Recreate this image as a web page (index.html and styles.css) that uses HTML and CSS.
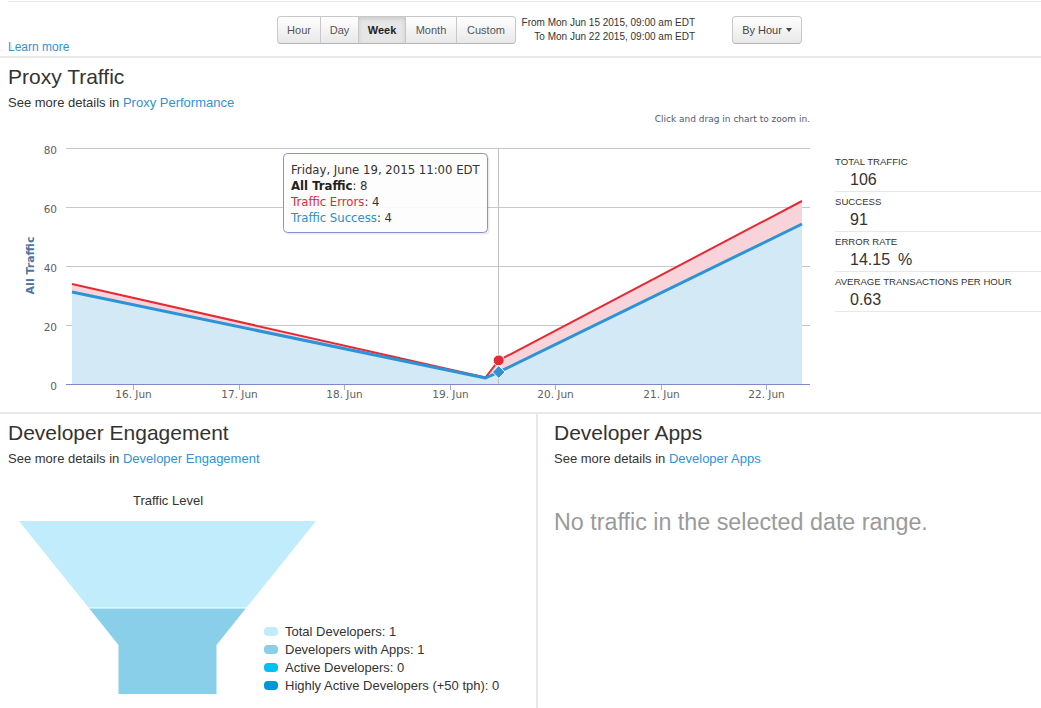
FILE: index.html
```html
<!DOCTYPE html>
<html>
<head>
<meta charset="utf-8">
<title>Analytics</title>
<link rel="stylesheet" href="styles.css">
</head>
<body>
<div class="topbar">
  <a class="learn" href="#">Learn more</a>
  <div class="btn-group">
    <span class="btn b-hour">Hour</span>
    <span class="btn b-day">Day</span>
    <span class="btn b-week active">Week</span>
    <span class="btn b-month">Month</span>
    <span class="btn b-custom">Custom</span>
  </div>
  <div class="range">
    <div>From Mon Jun 15 2015, 09:00 am EDT</div>
    <div>To Mon Jun 22 2015, 09:00 am EDT</div>
  </div>
  <span class="btn dropdown">By Hour <span class="caret"></span></span>
</div>
<div class="rule"></div>

<section class="proxy">
  <div class="head">
    <h2>Proxy Traffic</h2>
    <p class="more">See more details in <a href="#">Proxy Performance</a></p>
  </div>
  <div class="chart-row">
    <svg class="chart" width="835" height="301" viewBox="0 111 835 301">
      <text class="subtitle" x="810" y="122" text-anchor="end">Click and drag in chart to zoom in.</text>
      <g class="grid">
        <line x1="66" y1="148.5" x2="810" y2="148.5"/>
        <line x1="66" y1="207.5" x2="810" y2="207.5"/>
        <line x1="66" y1="266.5" x2="810" y2="266.5"/>
        <line x1="66" y1="325.5" x2="810" y2="325.5"/>
      </g>
      <g class="ylab">
        <text x="57" y="154" text-anchor="end">80</text>
        <text x="57" y="213" text-anchor="end">60</text>
        <text x="57" y="272" text-anchor="end">40</text>
        <text x="57" y="331" text-anchor="end">20</text>
        <text x="57" y="390" text-anchor="end">0</text>
      </g>
      <text class="ytitle" transform="translate(33.5,265.5) rotate(-90)" text-anchor="middle">All Traffic</text>
      <polygon class="area-blue" points="72,384 72,292 485.5,378 498.7,372.2 802,224 802,384"/>
      <polygon class="area-red" points="72,284 485.5,378 498.7,360.4 802,201 802,224 498.7,372.2 485.5,378 72,292"/>
      <line class="cross" x1="498.5" y1="148" x2="498.5" y2="384"/>
      <polyline class="line-red" points="72,284 485.5,377.5 498.7,360.4 802,201"/>
      <polyline class="line-blue" points="72,292 485.5,378 498.7,372.2 802,224"/>
      <line class="axis" x1="66" y1="384.5" x2="810" y2="384.5"/>
      <g class="ticks">
        <line x1="133.5" y1="385" x2="133.5" y2="390"/>
        <line x1="239.5" y1="385" x2="239.5" y2="390"/>
        <line x1="344.5" y1="385" x2="344.5" y2="390"/>
        <line x1="450.5" y1="385" x2="450.5" y2="390"/>
        <line x1="555.5" y1="385" x2="555.5" y2="390"/>
        <line x1="661.5" y1="385" x2="661.5" y2="390"/>
        <line x1="766.5" y1="385" x2="766.5" y2="390"/>
      </g>
      <g class="xlab" text-anchor="middle">
        <text x="133.5" y="398">16. Jun</text>
        <text x="239.5" y="398">17. Jun</text>
        <text x="344.5" y="398">18. Jun</text>
        <text x="450.5" y="398">19. Jun</text>
        <text x="555.5" y="398">20. Jun</text>
        <text x="661.5" y="398">21. Jun</text>
        <text x="766.5" y="398">22. Jun</text>
      </g>
      <circle class="mark-red" cx="498.7" cy="360.4" r="5.5"/>
      <path class="mark-blue" d="M498.7 365.6 L505 372 L498.7 378.4 L492.4 372 Z"/>
      <g class="tooltip">
        <rect class="tt-shadow" x="285.5" y="155.5" width="204" height="79" rx="4"/>
        <rect class="tt-box" x="283.5" y="153.5" width="204" height="79" rx="4"/>
        <text x="291" y="174">Friday, June 19, 2015 11:00 EDT</text>
        <text x="291" y="190"><tspan class="tt-bold">All Traffic</tspan>: 8</text>
        <text x="291" y="206"><tspan class="tt-red">Traffic Errors</tspan>: 4</text>
        <text x="291" y="222"><tspan class="tt-blue">Traffic Success</tspan>: 4</text>
      </g>
    </svg>
    <div class="stats">
      <div class="stat"><div class="label">TOTAL TRAFFIC</div><div class="value">106</div></div>
      <div class="stat"><div class="label">SUCCESS</div><div class="value">91</div></div>
      <div class="stat"><div class="label">ERROR RATE</div><div class="value">14.15<span class="unit">%</span></div></div>
      <div class="stat"><div class="label">AVERAGE TRANSACTIONS PER HOUR</div><div class="value">0.63</div></div>
    </div>
  </div>
</section>
<div class="rule"></div>

<div class="bottom">
  <section class="col col-left">
    <div class="head">
      <h2>Developer Engagement</h2>
      <p class="more">See more details in <a href="#">Developer Engagement</a></p>
    </div>
    <div class="funnel-title">Traffic Level</div>
    <svg class="funnel" width="536" height="187" viewBox="0 0 536 187">
      <polygon class="f1" points="19,0 316,0 246.5,86.5 88.5,86.5"/>
      <polygon class="f2" points="89.3,87.5 245.7,87.5 216.5,124 216.5,173 118.5,173 118.5,124"/>
      <g class="legend">
        <rect class="l1" x="264" y="106" width="14" height="9" rx="4"/>
        <text x="285" y="115">Total Developers: 1</text>
        <rect class="l2" x="264" y="124" width="14" height="9" rx="4"/>
        <text x="285" y="133">Developers with Apps: 1</text>
        <rect class="l3" x="264" y="142" width="14" height="9" rx="4"/>
        <text x="285" y="151">Active Developers: 0</text>
        <rect class="l4" x="264" y="160" width="14" height="9" rx="4"/>
        <text x="285" y="169">Highly Active Developers (+50 tph): 0</text>
      </g>
    </svg>
  </section>
  <section class="col col-right">
    <div class="head">
      <h2>Developer Apps</h2>
      <p class="more">See more details in <a href="#">Developer Apps</a></p>
    </div>
    <p class="empty">No traffic in the selected date range.</p>
  </section>
</div>
</body>
</html>
```

FILE: styles.css
```css
html, body {
  margin: 0;
  padding: 0;
  background: #fff;
}
body {
  font-family: "Liberation Sans", Arial, Helvetica, sans-serif;
  color: #333;
  width: 1041px;
  height: 708px;
  overflow: hidden;
}
a {
  color: #3192d6;
  text-decoration: none;
}

/* top toolbar */
.topbar {
  margin: 1px 0 0 8px;
  border-top: 1px solid #ebebeb;
  height: 54px;
  display: flex;
  align-items: flex-start;
}
.learn {
  width: 269px;
  flex: none;
  align-self: flex-end;
  margin-bottom: 1px;
  font-size: 12px;
  line-height: 16px;
}
.btn-group {
  display: flex;
  margin-top: 14px;
}
.btn {
  box-sizing: border-box;
  height: 28px;
  display: flex;
  align-items: center;
  justify-content: center;
  font-size: 11px;
  color: #555;
  border: 1px solid #c8c8c8;
  border-bottom-color: #b5b5b5;
  background: linear-gradient(#ffffff, #e8e8e8);
  margin-left: -1px;
}
.btn-group .btn:first-child {
  margin-left: 0;
  border-radius: 4px 0 0 4px;
}
.btn-group .btn:last-child {
  border-radius: 0 4px 4px 0;
}
.b-hour { width: 44px; }
.b-day { width: 39px; }
.b-week { width: 48px; }
.b-month { width: 52px; }
.b-custom { width: 60px; }
.btn.active {
  background: #e6e6e6;
  box-shadow: inset 0 2px 4px rgba(0, 0, 0, 0.12);
  font-weight: bold;
  color: #222;
}
.range {
  width: 174px;
  margin-left: 5px;
  margin-top: 14px;
  font-size: 10px;
  line-height: 14px;
  text-align: right;
  color: #333;
  white-space: nowrap;
}
.dropdown {
  margin-top: 14px;
  margin-left: 37px;
  width: 70px;
  border-radius: 4px;
  color: #444;
  gap: 4px;
}
.caret {
  width: 0;
  height: 0;
  border-top: 4px solid #444;
  border-left: 3.5px solid transparent;
  border-right: 3.5px solid transparent;
}

.rule {
  height: 2px;
  background: #e8e8e8;
}

/* section headers */
.head {
  padding: 7px 8px 0;
}
.head h2 {
  margin: 0;
  font-size: 21px;
  line-height: 24px;
  font-weight: normal;
  color: #333;
}
.more {
  margin: 5px 0 0;
  font-size: 13px;
  line-height: 17px;
  color: #333;
}

/* proxy */
.proxy {
  height: 354px;
}
.chart-row {
  display: flex;
  height: 301px;
}
.chart {
  flex: none;
  display: block;
}
.chart text {
  font-family: "DejaVu Sans", Verdana, sans-serif;
}
.subtitle {
  font-size: 9px;
  fill: #4f5a72;
}
.grid line {
  stroke: #c8c8c8;
  stroke-width: 1;
}
.ylab text, .xlab text {
  font-size: 10.5px;
  fill: #606060;
}
.ytitle {
  font-size: 11px;
  font-weight: bold;
  fill: #4d759e;
}
.area-blue { fill: #d3e9f6; }
.area-red { fill: #f8d4da; }
.cross { stroke: #c0c0c0; stroke-width: 1; }
.line-red {
  fill: none;
  stroke: #e42a35;
  stroke-width: 2;
  stroke-linejoin: round;
}
.line-blue {
  fill: none;
  stroke: #2b93d6;
  stroke-width: 3;
  stroke-linejoin: round;
}
.axis { stroke: #8088c9; stroke-width: 1; }
.ticks line { stroke: #a9aed9; stroke-width: 1; }
.mark-red { fill: #e42a35; stroke: #fff; stroke-width: 1; }
.mark-blue { fill: #2b93d6; stroke: #fff; stroke-width: 1; }
.tt-shadow { fill: rgba(0, 0, 0, 0.08); }
.tt-box {
  fill: rgba(255, 255, 255, 0.9);
  stroke: #8a90cf;
  stroke-width: 1;
}
.tooltip text {
  font-size: 11.7px;
  fill: #333;
}
.tooltip .tt-bold { font-weight: bold; fill: #222; }
.tooltip .tt-red { fill: #e42a35; }
.tooltip .tt-blue { fill: #2b8fd0; }

.stats {
  flex: 1;
  margin-top: 41px;
}
.stat {
  padding: 4px 0 1px;
  border-bottom: 1px solid #e8e8e8;
}
.stat .label {
  font-size: 9.6px;
  line-height: 12px;
  color: #333;
}
.stat .value {
  margin-top: 2px;
  padding-left: 15px;
  font-size: 16px;
  line-height: 20px;
  color: #333;
}
.stat .unit {
  margin-left: 8px;
}

/* bottom panels */
.bottom {
  display: flex;
  height: 294px;
}
.col-left {
  width: 536px;
  flex: none;
  border-right: 2px solid #e8e8e8;
}
.col-right {
  flex: 1;
  padding-left: 16px;
}
.col-right .head {
  padding-left: 0;
}
.funnel-title {
  margin-top: 26px;
  width: 336px;
  text-align: center;
  font-size: 13px;
  line-height: 16px;
  color: #333;
}
.funnel {
  display: block;
  margin-top: 12px;
}
.f1 { fill: #c1ecfc; }
.f2 { fill: #89cfea; }
.legend text {
  font-family: "Liberation Sans", Arial, sans-serif;
  font-size: 13px;
  fill: #333;
}
.l1 { fill: #c1ecfc; }
.l2 { fill: #89cfea; }
.l3 { fill: #00c0f6; }
.l4 { fill: #0096da; }
.empty {
  margin: 41px 0 0;
  font-size: 23.3px;
  line-height: 28px;
  color: #9a9a9a;
}
```
